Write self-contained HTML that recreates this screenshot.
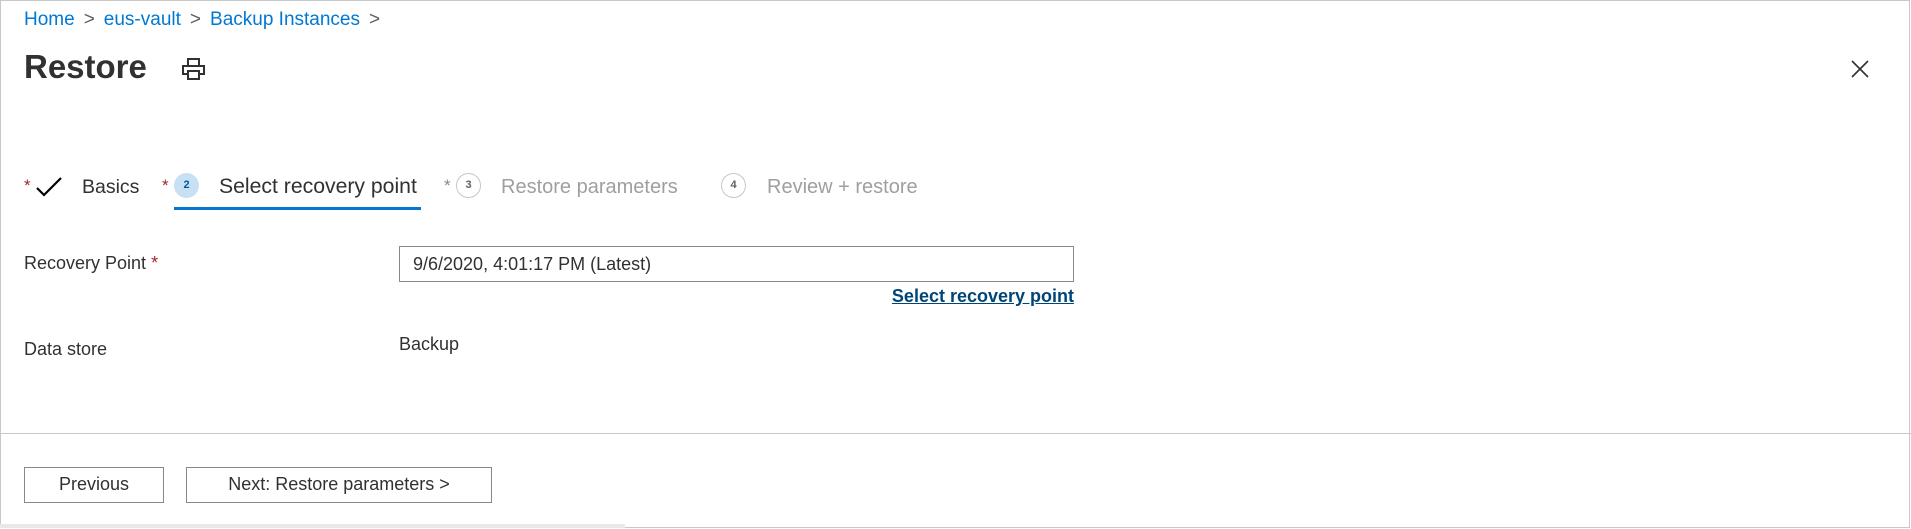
<!DOCTYPE html>
<html><head><meta charset="utf-8"><style>
*{margin:0;padding:0;box-sizing:border-box}
body{width:1911px;height:529px;background:#fff;font-family:"Liberation Sans",sans-serif;color:#323130;position:relative;overflow:hidden}
.frame{position:absolute;left:0;top:0;width:1910px;height:528px;border:1px solid #c8c8c8}
.a{position:absolute;white-space:nowrap}
.bc{top:9px;left:24px;font-size:19px;color:#0078d4}
.bc span{color:#605e5c;margin:0 9px}
.title{top:48px;left:24px;font-size:33px;font-weight:bold;color:#323130}
.step{top:176px;font-size:20px}
.star{color:#a4262c;font-size:17px}
.circ{width:25px;height:25px;border-radius:50%;border:1px solid #c8c6c4;font-size:11px;font-weight:bold;text-align:center;line-height:23px;color:#605e5c}
.lbl{font-size:18px;color:#323130}
.btn{position:absolute;top:467px;height:36px;border:1px solid #8a8886;font-size:18px;text-align:center;line-height:33px;color:#323130}
</style></head><body>
<div class="frame"></div>
<div class="a bc">Home<span>&gt;</span>eus-vault<span>&gt;</span>Backup Instances<span>&gt;</span></div>
<div class="a title">Restore</div>
<svg class="a" style="left:182px;top:58px" width="24" height="22" viewBox="0 0 24 22" fill="none" stroke="#323130" stroke-width="2"><rect x="6" y="1" width="11" height="7"/><rect x="1" y="8" width="21" height="8"/><rect x="6" y="13" width="11" height="8" fill="#fff"/></svg>
<svg class="a" style="left:1851px;top:60px" width="18" height="18" viewBox="0 0 18 18" stroke="#323130" stroke-width="1.6"><path d="M1 1L17 17M17 1L1 17"/></svg>

<div class="a star" style="left:24px;top:176px">*</div>
<svg class="a" style="left:35px;top:176px" width="28" height="22" viewBox="0 0 28 22" fill="none" stroke="#000" stroke-width="2.2"><path d="M2 12L9 19L26 2"/></svg>
<div class="a step" style="left:82px;font-size:19.5px">Basics</div>
<div class="a star" style="left:162px;top:176px">*</div>
<div class="a circ" style="left:174px;top:173px;background:#c7e0f4;border-color:#c7e0f4;color:#005a9e">2</div>
<div class="a step" style="left:219px;color:#323130;font-size:21.2px;top:175px">Select recovery point</div>
<div class="a" style="left:174px;top:207px;width:247px;height:3px;background:#0078d4"></div>
<div class="a star" style="left:444px;top:176px;color:#8a8886">*</div>
<div class="a circ" style="left:456px;top:173px">3</div>
<div class="a step" style="left:501px;color:#a19f9d">Restore parameters</div>
<div class="a circ" style="left:721px;top:173px">4</div>
<div class="a step" style="left:767px;color:#a19f9d">Review + restore</div>

<div class="a lbl" style="left:24px;top:253px">Recovery Point <span style="color:#a4262c">*</span></div>
<div class="a" style="left:399px;top:246px;width:675px;height:36px;border:1px solid #8a8886;font-size:18px;padding:7px 13px;color:#323130">9/6/2020, 4:01:17 PM (Latest)</div>
<div class="a" style="right:837px;top:286px;font-size:18px;font-weight:bold;color:#004578;text-decoration:underline">Select recovery point</div>
<div class="a lbl" style="left:24px;top:339px">Data store</div>
<div class="a lbl" style="left:399px;top:334px">Backup</div>

<div class="a" style="left:0;top:433px;width:1911px;height:1px;background:#c8c8c8"></div>
<div class="btn" style="left:24px;width:140px">Previous</div>
<div class="btn" style="left:186px;width:306px">Next: Restore parameters &gt;</div>
<div class="a" style="left:0;top:524px;width:625px;height:4px;background:#e8e8e8"></div>
</body></html>
